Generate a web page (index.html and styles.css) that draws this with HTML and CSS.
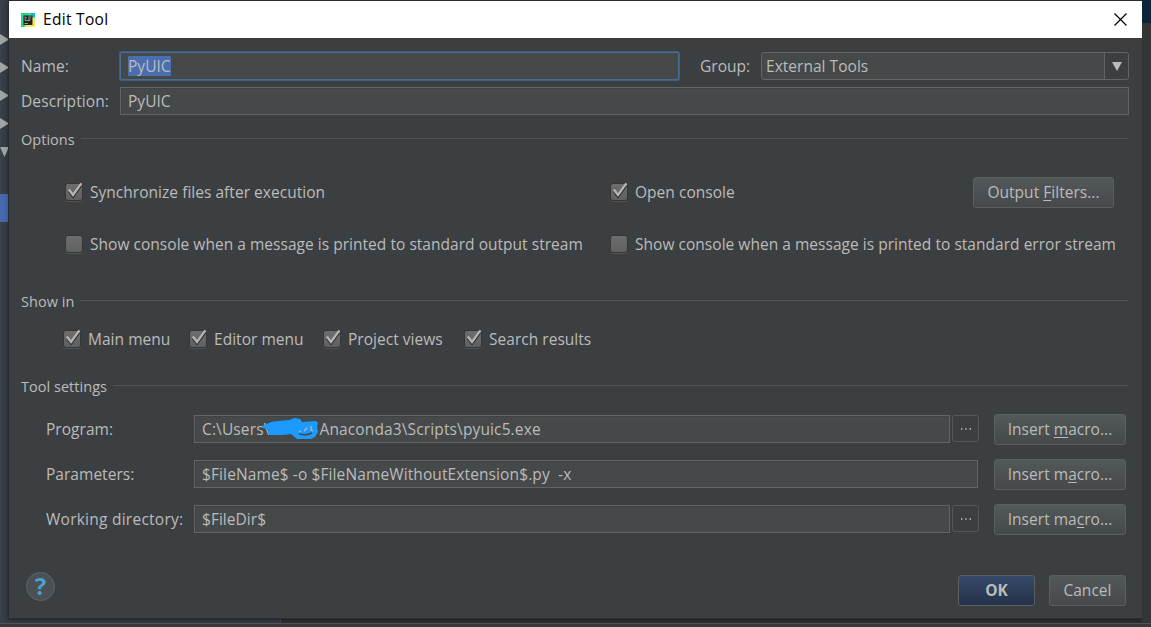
FILE: index.html
```
<!DOCTYPE html>
<html lang="en">
<head>
    <meta charset="UTF-8">
    <meta name="viewport" content="width=device-width, initial-scale=1.0">
    <title>Edit Tool</title>
    <link rel="stylesheet" href="styles.css">
</head>
<body>
    <!-- shared check mark -->
    <svg width="0" height="0" class="defs">
        <symbol id="check" viewBox="0 0 20 20">
            <path d="M5 10 L9 15.5 L17 4.5" fill="none" stroke="#252525" stroke-width="2.4"/>
            <path d="M4.8 8.5 L9 14 L17.4 2.4" fill="none" stroke="#b4b4b4" stroke-width="2.4"/>
        </symbol>
    </svg>

    <div class="tree">
        <svg width="9" height="130" viewBox="0 0 9 130" fill="#a2a4a6">
            <path d="M0 6 L9 11.5 L0 17Z"/>
            <path d="M0 34 L9 39.5 L0 45Z"/>
            <path d="M0 62 L9 67.5 L0 73Z"/>
            <path d="M0 90 L9 95.5 L0 101Z"/>
            <path d="M0 119 L9 119 L4.5 129Z"/>
        </svg>
        <div class="tree-selected"></div>
    </div>

    <div class="dialog">
        <div class="titlebar">
            <svg width="14" height="14" viewBox="0 0 14 14">
                <rect width="14" height="14" fill="#21d789"/>
                <path d="M8 0 H14 V14 H3 L10 7Z" fill="#f5ed55"/>
                <path d="M8 0 H14 V5 L11 4Z" fill="#18b8d9"/>
                <rect x="2.5" y="2.5" width="9" height="9.5" fill="#222"/>
                <path d="M3.5 5 H6 M3.5 4 H5 M4 6 V7 M7 4 H10.5 M7 6 H10 M4 7.5 H9 M3.5 10.5 H7" stroke="#999" fill="none"/>
            </svg>
            <span class="title">Edit Tool</span>
            <svg class="close" width="13" height="13" viewBox="0 0 13 13">
                <path d="M0.5 0.5 L12.5 12.5 M12.5 0.5 L0.5 12.5" stroke="#000" stroke-width="1.2"/>
            </svg>
        </div>

        <div class="content">
            <div class="row name-row">
                <span class="label">Name:</span>
                <div class="field focused"><span class="selected">PyUIC</span></div>
                <span class="group-label">Group:</span>
                <div class="select">
                    <span class="select-text">External Tools</span>
                    <span class="arrow"><svg width="10" height="9" viewBox="0 0 10 9"><path d="M0 0 H10 L5 9Z" fill="#bbb"/></svg></span>
                </div>
            </div>
            <div class="row desc-row">
                <span class="label">Description:</span>
                <div class="field">PyUIC</div>
            </div>

            <div class="section options-title"><span>Options</span></div>
            <div class="options">
                <div class="check"><i class="box"><svg><use href="#check"/></svg></i><span>Synchronize files after execution</span></div>
                <div class="check"><i class="box"><svg><use href="#check"/></svg></i><span>Open console</span></div>
                <button class="btn filters"><span>Output <u>F</u>ilters...</span></button>
                <div class="check"><i class="box"></i><span>Show console when a message is printed to standard output stream</span></div>
                <div class="check wide"><i class="box"></i><span>Show console when a message is printed to standard error stream</span></div>
            </div>

            <div class="section show-title"><span>Show in</span></div>
            <div class="show-in">
                <div class="check main-menu"><i class="box"><svg><use href="#check"/></svg></i><span>Main menu</span></div>
                <div class="check editor-menu"><i class="box"><svg><use href="#check"/></svg></i><span>Editor menu</span></div>
                <div class="check project-views"><i class="box"><svg><use href="#check"/></svg></i><span>Project views</span></div>
                <div class="check"><i class="box"><svg><use href="#check"/></svg></i><span>Search results</span></div>
            </div>

            <div class="section tool-title"><span>Tool settings</span></div>
            <div class="settings">
                <div class="row">
                    <span class="setting-label">Program:</span>
                    <div class="field path"><span>C:\Users\</span><span class="hidden-name"><svg width="58" height="24" viewBox="0 0 58 24">
                        <path d="M1 9 L10 5 L17 4 L28 3 L34 1 L39 2 L41 5 L55 4 Q58 6 56 9 L57 15 L54 20 L50 22 L36 22 L30 17 L22 18 L9 18 Q5 16 8 13 L2 11Z" fill="#1b9aff"/>
                        <path d="M38 17 Q45 19 51 16" fill="none" stroke="#454949" stroke-width="1.5"/>
                        <path d="M38 15 L40 14 M43 14 L46 11 M50 9 L50 13 L52 14" fill="none" stroke="#bbb" stroke-width="1.2"/>
                    </svg></span><span>Anaconda3\Scripts\pyuic5.exe</span></div>
                    <button class="browse"><svg width="10" height="2"><path d="M0 1 H10" stroke="#ccc" stroke-width="1.3" stroke-dasharray="1.3 3"/></svg></button>
                    <button class="btn macro"><span>Insert <u>m</u>acro...</span></button>
                </div>
                <div class="row">
                    <span class="setting-label">Parameters:</span>
                    <div class="field params">$FileName$ -o $FileNameWithoutExtension$.py&nbsp; -x</div>
                    <button class="btn macro"><span>Insert m<u>a</u>cro...</span></button>
                </div>
                <div class="row">
                    <span class="setting-label directory">Working directory:</span>
                    <div class="field">$FileDir$</div>
                    <button class="browse"><svg width="10" height="2"><path d="M0 1 H10" stroke="#ccc" stroke-width="1.3" stroke-dasharray="1.3 3"/></svg></button>
                    <button class="btn macro"><span>Insert ma<u>c</u>ro...</span></button>
                </div>
            </div>

            <div class="footer">
                <div class="help">?</div>
                <button class="btn ok">OK</button>
                <button class="btn cancel">Cancel</button>
            </div>
        </div>
    </div>

    <div class="gutter"></div>
    <div class="statusbar"></div>
</body>
</html>
```

FILE: styles.css
```
* {
    box-sizing: border-box;
}
body {
    margin: 0;
    width: 1151px;
    height: 627px;
    overflow: hidden;
    display: grid;
    grid-template-columns: 9px 1133px 9px;
    grid-template-rows: 623px 4px;
    background: linear-gradient(90deg, #353c45 280px, #4a4b4c 280px, #4a4b4c 281px, #303132 281px);
    font-family: "Open Sans", "Noto Sans", sans-serif;
    font-size: 15.5px;
    letter-spacing: 0.03px;
    color: #bbb;
    white-space: nowrap;
}
.defs {
    position: absolute;
}
.tree {
    padding-top: 28px;
    background: linear-gradient(90deg, #3a414b, #333941);
}
.tree svg {
    display: block;
}
.tree-selected {
    height: 28px;
    margin-top: 36px;
    background: #4669ae;
}
.dialog {
    margin-top: 1px;
    height: 617px;
    background: #3c3f41;
    box-shadow: 0 0 0 1px #2b2c2e, 0 2px 5px rgba(0, 0, 0, 0.4);
}
.gutter {
    background: linear-gradient(#0b253b 23px, #343537 23px);
}
.statusbar {
    grid-column: 1 / 4;
    background: #37393b;
    border-top: 1px solid #505253;
}
.titlebar {
    height: 37px;
    padding: 0 15px 0 12px;
    display: flex;
    align-items: center;
    background: #fff;
    color: #000;
}
.title {
    margin: -2px 0 0 8px;
    flex: 1;
    letter-spacing: 0.3px;
}
.close {
    margin-top: -1px;
}
.content {
    padding: 14px 13px 0 12px;
}
.row {
    display: flex;
    align-items: center;
}
.label {
    width: 99px;
    letter-spacing: 0.1px;
}
.field {
    flex: 1;
    height: 28px;
    display: flex;
    align-items: center;
    padding-left: 7px;
    background: #45494a;
    border: 1px solid #646464;
    box-shadow: inset 1px 1px 0 #3f4344;
}
.name-row {
    height: 28px;
}
.name-row .field {
    flex: none;
    width: 559px;
    margin-right: 21px;
    border-color: #466d94;
    border-radius: 2px;
    box-shadow: 0 0 0 1px #3d6185;
}
.selected {
    background: #4b6eaf;
    line-height: 20px;
}
.group-label {
    width: 61px;
}
.select {
    flex: 1;
    height: 28px;
    display: flex;
    background: #45494a;
    border: 1px solid #646464;
    border-radius: 3px;
}
.select-text {
    flex: 1;
    padding-left: 4px;
    line-height: 27px;
}
.arrow {
    width: 24px;
    display: flex;
    align-items: center;
    justify-content: center;
    border-left: 1px solid #646464;
    background: #3c3f41;
    border-radius: 0 3px 3px 0;
}
.desc-row {
    margin-top: 7px;
    height: 28px;
}
.section {
    height: 22px;
    display: flex;
    align-items: center;
    gap: 6px;
    font-size: 14.5px;
}
.section::after {
    content: "";
    flex: 1;
    height: 1px;
    margin: 0 1px 2px 0;
    background: #515355;
}
.options-title {
    margin-top: 13px;
}
.options {
    margin-top: 27px;
    padding: 0 15px 0 44px;
    display: grid;
    grid-template-columns: 545px 1fr 141px;
    grid-template-rows: 31px 30px;
    row-gap: 21px;
    align-items: center;
}
.wide {
    grid-column: 2 / 4;
}
.check {
    height: 30px;
    display: flex;
    align-items: center;
}
.options .check:nth-child(-n+2) {
    margin-top: -1px;
}
.box {
    flex: none;
    width: 18px;
    height: 18px;
    margin-right: 7px;
    border: 1px solid #343536;
    border-radius: 3px;
    background: linear-gradient(#6d6d6d, #606060);
    box-shadow: 0 1px 0 #505253;
}
.box svg {
    display: block;
    width: 20px;
    height: 20px;
    margin: -3px 0 0 -2px;
}
.show-title {
    margin-top: 31px;
}
.show-in {
    display: flex;
    margin-top: 12px;
    padding-left: 42px;
}
.main-menu {
    width: 126px;
}
.editor-menu {
    width: 134px;
}
.project-views {
    width: 141px;
}
.tool-title {
    margin-top: 21px;
}
.settings {
    display: flex;
    flex-direction: column;
    gap: 14px;
    margin-top: 17px;
    padding: 0 3px 0 25px;
}
.settings .row {
    align-items: flex-start;
}
.setting-label {
    width: 148px;
    line-height: 30px;
}
.directory {
    letter-spacing: 0.25px;
}
.settings .field {
    margin-top: 1px;
}
.path {
    letter-spacing: 0.13px;
}
.params {
    letter-spacing: 0.11px;
}
.hidden-name {
    width: 50px;
}
.hidden-name svg {
    display: block;
    margin-left: -8px;
}
button {
    font: inherit;
    color: inherit;
    letter-spacing: inherit;
    padding: 0;
}
.btn {
    height: 31px;
    padding-bottom: 1px;
    border: 1px solid #5b5f60;
    border-radius: 3px;
    background: linear-gradient(#535859, #45494b);
}
.btn u {
    text-underline-offset: 2px;
}
.macro {
    width: 132px;
    margin-left: 16px;
}
.browse {
    width: 27px;
    height: 27px;
    margin: 1px -1px 0 2px;
    display: flex;
    align-items: center;
    justify-content: center;
    border: 1px solid #555859;
    border-radius: 3px;
    background: #3c3f41;
}
.footer {
    display: flex;
    margin: 40px 3px 0 5px;
}
.help {
    width: 29px;
    height: 29px;
    margin: -3px auto 0 0;
    border: 1px solid #606466;
    border-radius: 50%;
    background: #4a5053;
    color: #4a9fd0;
    font-size: 24px;
    font-weight: bold;
    line-height: 26px;
    text-align: center;
}
.ok {
    width: 77px;
    margin-right: 14px;
    background: linear-gradient(#36496a, #253348);
    font-weight: bold;
}
.cancel {
    width: 77px;
}
```
